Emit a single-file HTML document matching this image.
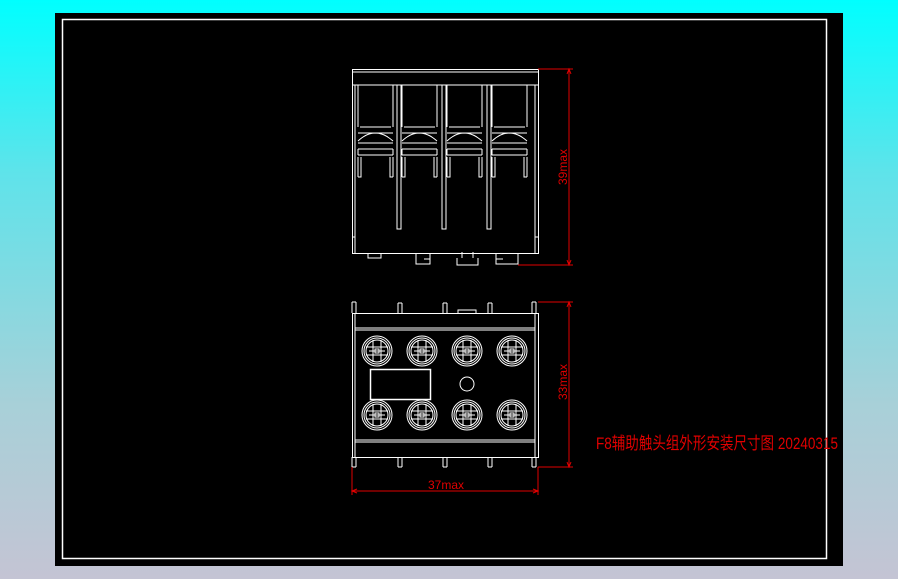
<!DOCTYPE html>
<html><head><meta charset="utf-8"><style>
html,body{margin:0;padding:0;width:898px;height:579px;overflow:hidden;background:linear-gradient(#00ffff 0%,#5fe3ea 30%,#a8d0d8 70%,#c4c4d4 100%);}
svg{position:absolute;left:0;top:0}
</style></head><body>
<svg width="898" height="579" viewBox="0 0 898 579" xmlns="http://www.w3.org/2000/svg">
<defs>
<g id="scr" fill="none" stroke="#fff" stroke-width="1">
<circle r="15"/><circle r="13"/><circle r="11"/>
<path d="M-4,-11V11M4,-11V11M-11,-4H11M-11,4H11M-8,0H8"/>
<rect x="-2" y="-2" width="4" height="4"/>
</g>
<g id="col" fill="none" stroke="#fff" stroke-width="1">
<path d="M3,0V42M38,0V42M5,42H36M3,48H38M3,56Q20,40 38,56M8,52Q20,44 33,52M3,58H38M3,64H38M3,64V70M38,64V70M3,70H38M3,72V92M38,72V92M3,92H6V72M38,92H35V72"/>
</g>
</defs>
<rect x="55" y="13" width="788" height="553" fill="#000"/>
<rect x="62.5" y="19.5" width="764" height="539" fill="none" stroke="#fff" stroke-width="1.5"/>
<g fill="none" stroke="#fff" stroke-width="1">
<!-- top view -->
<rect x="352.5" y="69.5" width="186" height="184"/>
<path d="M352,72H538M352,85H538M355,85V253M535,85V253M352,237H355M535,237H538"/>
<use href="#col" x="355" y="85"/>
<use href="#col" x="399" y="85"/>
<use href="#col" x="444" y="85"/>
<use href="#col" x="489" y="85"/>
<path d="M397,85V229H401V85M442,85V229H446V85M487,85V229H491V85"/>
<path d="M368,253V258H381V253M416,253V264H430V253M424,259H430M457,258V265H478V258M462,258V252M473,258V252M496,253V264H518V253M496,259H503"/>
<!-- bottom view -->
<path d="M352,302V313M356,302V313M352,302H356M398,303V313M402,303V313M398,303H402M443,303V313M447,303V313M443,303H447M488,303V313M492,303V313M488,303H492M532,302V313M536,302V313M532,302H536M458,313V310H476V313"/>
<rect x="352.5" y="313.5" width="186" height="144"/>
<path d="M355,313V457M535,313V457M355,328H535M355,330H535M355,440H535M355,442H535"/>
<path d="M352,457V467M356,457V467M352,467H356M398,457V467M402,457V467M398,467H402M443,457V467M447,457V467M443,467H447M488,457V467M492,457V467M488,467H492M532,457V467M536,457V467M532,467H536"/>
<rect x="370.5" y="369.5" width="60" height="30" stroke-width="1.5"/>
<circle cx="467" cy="384" r="7"/>
</g>
<use href="#scr" x="377" y="351"/><use href="#scr" x="422" y="351"/><use href="#scr" x="467" y="351"/><use href="#scr" x="512" y="351"/>
<use href="#scr" x="377" y="415"/><use href="#scr" x="422" y="415"/><use href="#scr" x="467" y="415"/><use href="#scr" x="512" y="415"/>
<g stroke="#e00000" stroke-width="1" fill="none">
<path d="M538,69H573M569,69V265M518,265H573M538,302H573M569,302V467M538,467H573M352,467V495M538,467V495M352,491H538"/>
<path d="M567,74L569,69L571,74M567,260L569,265L571,260M567,307L569,302L571,307M567,462L569,467L571,462M357,489L352,491L357,493M533,489L538,491L533,493"/>
</g>
<g fill="#e00000" font-family="'Liberation Sans','Noto Sans CJK SC',sans-serif">
<text x="0" y="0" font-size="12" transform="translate(567,185) rotate(-90)" textLength="36" lengthAdjust="spacingAndGlyphs">39max</text>
<text x="0" y="0" font-size="12" transform="translate(567,400) rotate(-90)" textLength="36" lengthAdjust="spacingAndGlyphs">33max</text>
<text x="428" y="489" font-size="12" textLength="36" lengthAdjust="spacingAndGlyphs">37max</text>
<text x="596" y="449" font-size="17" textLength="242" lengthAdjust="spacingAndGlyphs">F8辅助触头组外形安装尺寸图 20240315</text>
</g>
</svg>
</body></html>
